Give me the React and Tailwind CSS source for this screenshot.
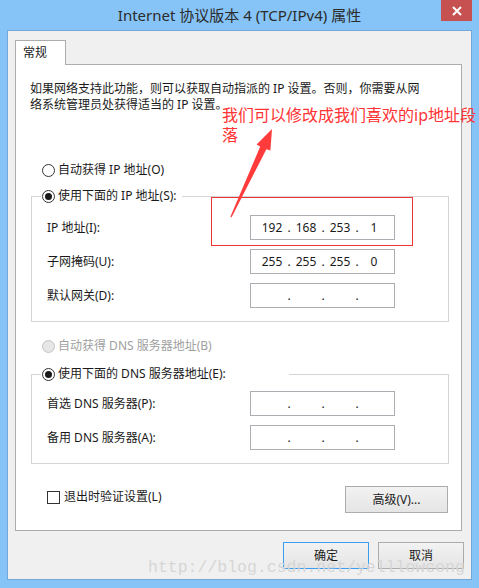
import { Fragment } from 'react';

const Radio = ({ checked, disabled }) => (
  <span
    className={`flex h-[13px] w-[13px] shrink-0 items-center justify-center rounded-full border ${
      disabled ? 'border-[#c4c4c4] bg-[#e6e6e6]' : 'border-[#333333] bg-white'
    }`}
  >
    {checked && <span className="h-[7px] w-[7px] rounded-full bg-[#1a1a1a]" />}
  </span>
);

function IpBox({ parts = ['', '', '', ''] }) {
  return (
    <div className="flex h-[25px] w-[145px] items-center border border-[#abadb3] bg-white pl-[7px] text-[12px] text-[#1a1a1a]">
      {parts.map((p, i) => (
        <Fragment key={i}>
          <span className="w-[28px] text-center">{p}</span>
          {i < 3 && <span className="w-[6px] text-center">.</span>}
        </Fragment>
      ))}
    </div>
  );
}

function Row({ label, parts }) {
  return (
    <div className="flex items-center">
      <span className="w-[218px] pl-[15px]">{label}</span>
      <IpBox parts={parts} />
    </div>
  );
}

function Button({ children, primary, className = '' }) {
  return (
    <div
      className={`flex h-[27px] items-center justify-center border bg-gradient-to-b from-[#f2f2f2] to-[#e5e5e5] text-[12px] text-[#1a1a1a] ${
        primary ? 'border-[#3c9cf0]' : 'border-[#acacac]'
      } ${className}`}
    >
      {children}
    </div>
  );
}

export default function App() {
  return (
    <div className="relative flex h-[588px] w-[479px] flex-col bg-[#86c4f8] font-['Noto_Sans','Noto_Sans_CJK_SC',sans-serif] text-[12px] text-[#1a1a1a]">
      {/* Title bar */}
      <div className="grid h-[30px] grid-cols-[1fr_auto_1fr]">
        <div />
        <div className="flex items-center text-[15px] text-[#2b2b2b]">Internet 协议版本 4 (TCP/IPv4) 属性</div>
        <div className="flex items-start justify-end pr-[7px]">
          <div className="flex h-[21px] w-[31px] items-center justify-center bg-[#c75050]">
            <svg width="10" height="10" viewBox="0 0 10 10">
              <path d="M1 1L9 9M9 1L1 9" stroke="white" strokeWidth="2" />
            </svg>
          </div>
        </div>
      </div>

      {/* Client area */}
      <div className="ml-[7px] flex h-[550px] w-[465px] flex-col border border-[#72a8d9] bg-[#f0f0f0] pl-[7px] pt-[9px]">
        {/* Tab */}
        <div className="relative z-10 -mb-px flex h-[25px] w-[51px] items-center border border-b-0 border-[#acacac] bg-white pl-[7px] pb-px">
          常规
        </div>

        {/* Tab page */}
        <div className="flex h-[467px] w-[447px] flex-col border border-[#acacac] bg-white">
          <p className="ml-[14px] mt-[16px] leading-[16px]">
            如果网络支持此功能，则可以获取自动指派的 IP 设置。否则，你需要从网
            <br />
            络系统管理员处获得适当的 IP 设置。
          </p>

          <div className="ml-[26px] mt-[49px] flex h-[16px] items-center gap-[3px]">
            <Radio />
            <span>自动获得 IP 地址(O)</span>
          </div>

          {/* IP group */}
          <div className="ml-[15px] mt-[18px] w-[418px] border border-[#d5d5d5] pb-[13px]">
            <div className="-mt-[9px] ml-[9px] flex h-[16px] w-fit items-center gap-[3px] bg-white pl-px pr-[5px]">
              <Radio checked />
              <span>使用下面的 IP 地址(S):</span>
            </div>
            <div className="mt-[11px] flex flex-col gap-[9px]">
              <Row label="IP 地址(I):" parts={['192', '168', '253', '1']} />
              <Row label="子网掩码(U):" parts={['255', '255', '255', '0']} />
              <Row label="默认网关(D):" />
            </div>
          </div>

          <div className="ml-[26px] mt-[16px] flex h-[16px] items-center gap-[3px] text-[#a0a0a0]">
            <Radio disabled />
            <span>自动获得 DNS 服务器地址(B)</span>
          </div>

          {/* DNS group */}
          <div className="ml-[15px] mt-[20px] w-[418px] border border-[#d5d5d5] pb-[13px]">
            <div className="-mt-[9px] ml-[9px] flex h-[16px] w-[248px] items-center gap-[3px] bg-white pl-px">
              <Radio checked />
              <span>使用下面的 DNS 服务器地址(E):</span>
            </div>
            <div className="mt-[9px] flex flex-col gap-[9px]">
              <Row label="首选 DNS 服务器(P):" />
              <Row label="备用 DNS 服务器(A):" />
            </div>
          </div>

          <div className="mt-[22px] flex items-start justify-between pl-[31px] pr-[13px]">
            <div className="mt-[2px] flex items-center gap-[4px]">
              <span className="h-[13px] w-[13px] border border-[#333333] bg-white" />
              <span>退出时验证设置(L)</span>
            </div>
            <Button className="w-[103px]">高级(V)...</Button>
          </div>
        </div>

        {/* Dialog buttons */}
        <div className="mt-[11px] flex justify-end gap-[9px] pr-[7px]">
          <Button primary className="w-[86px]">确定</Button>
          <Button className="w-[86px]">取消</Button>
        </div>
      </div>

      {/* Annotations */}
      <div className="absolute left-[222px] top-[105px] text-[16px] leading-[20px] text-[#ff3333]">
        我们可以修改成我们喜欢的ip地址段
        <br />
        落
      </div>
      <div className="absolute left-[211px] top-[197px] h-[49px] w-[202px] border border-[#ee3434]" />
      <svg className="pointer-events-none absolute left-0 top-0" width="479" height="588" viewBox="0 0 479 588">
        <polygon
          points="230.4,216.8 260.2,146.6 256.6,144.4 272,129 270.4,150.6 266.4,149.2 231.6,217.2"
          fill="#ff3b3b"
        />
      </svg>
      <div className="pointer-events-none absolute left-[148px] top-[557px] font-['Liberation_Mono',monospace] text-[16.5px] leading-[22px] text-[#d6d6d6]">
        http://blog.csdn.net/yelllowcong
      </div>
    </div>
  );
}
